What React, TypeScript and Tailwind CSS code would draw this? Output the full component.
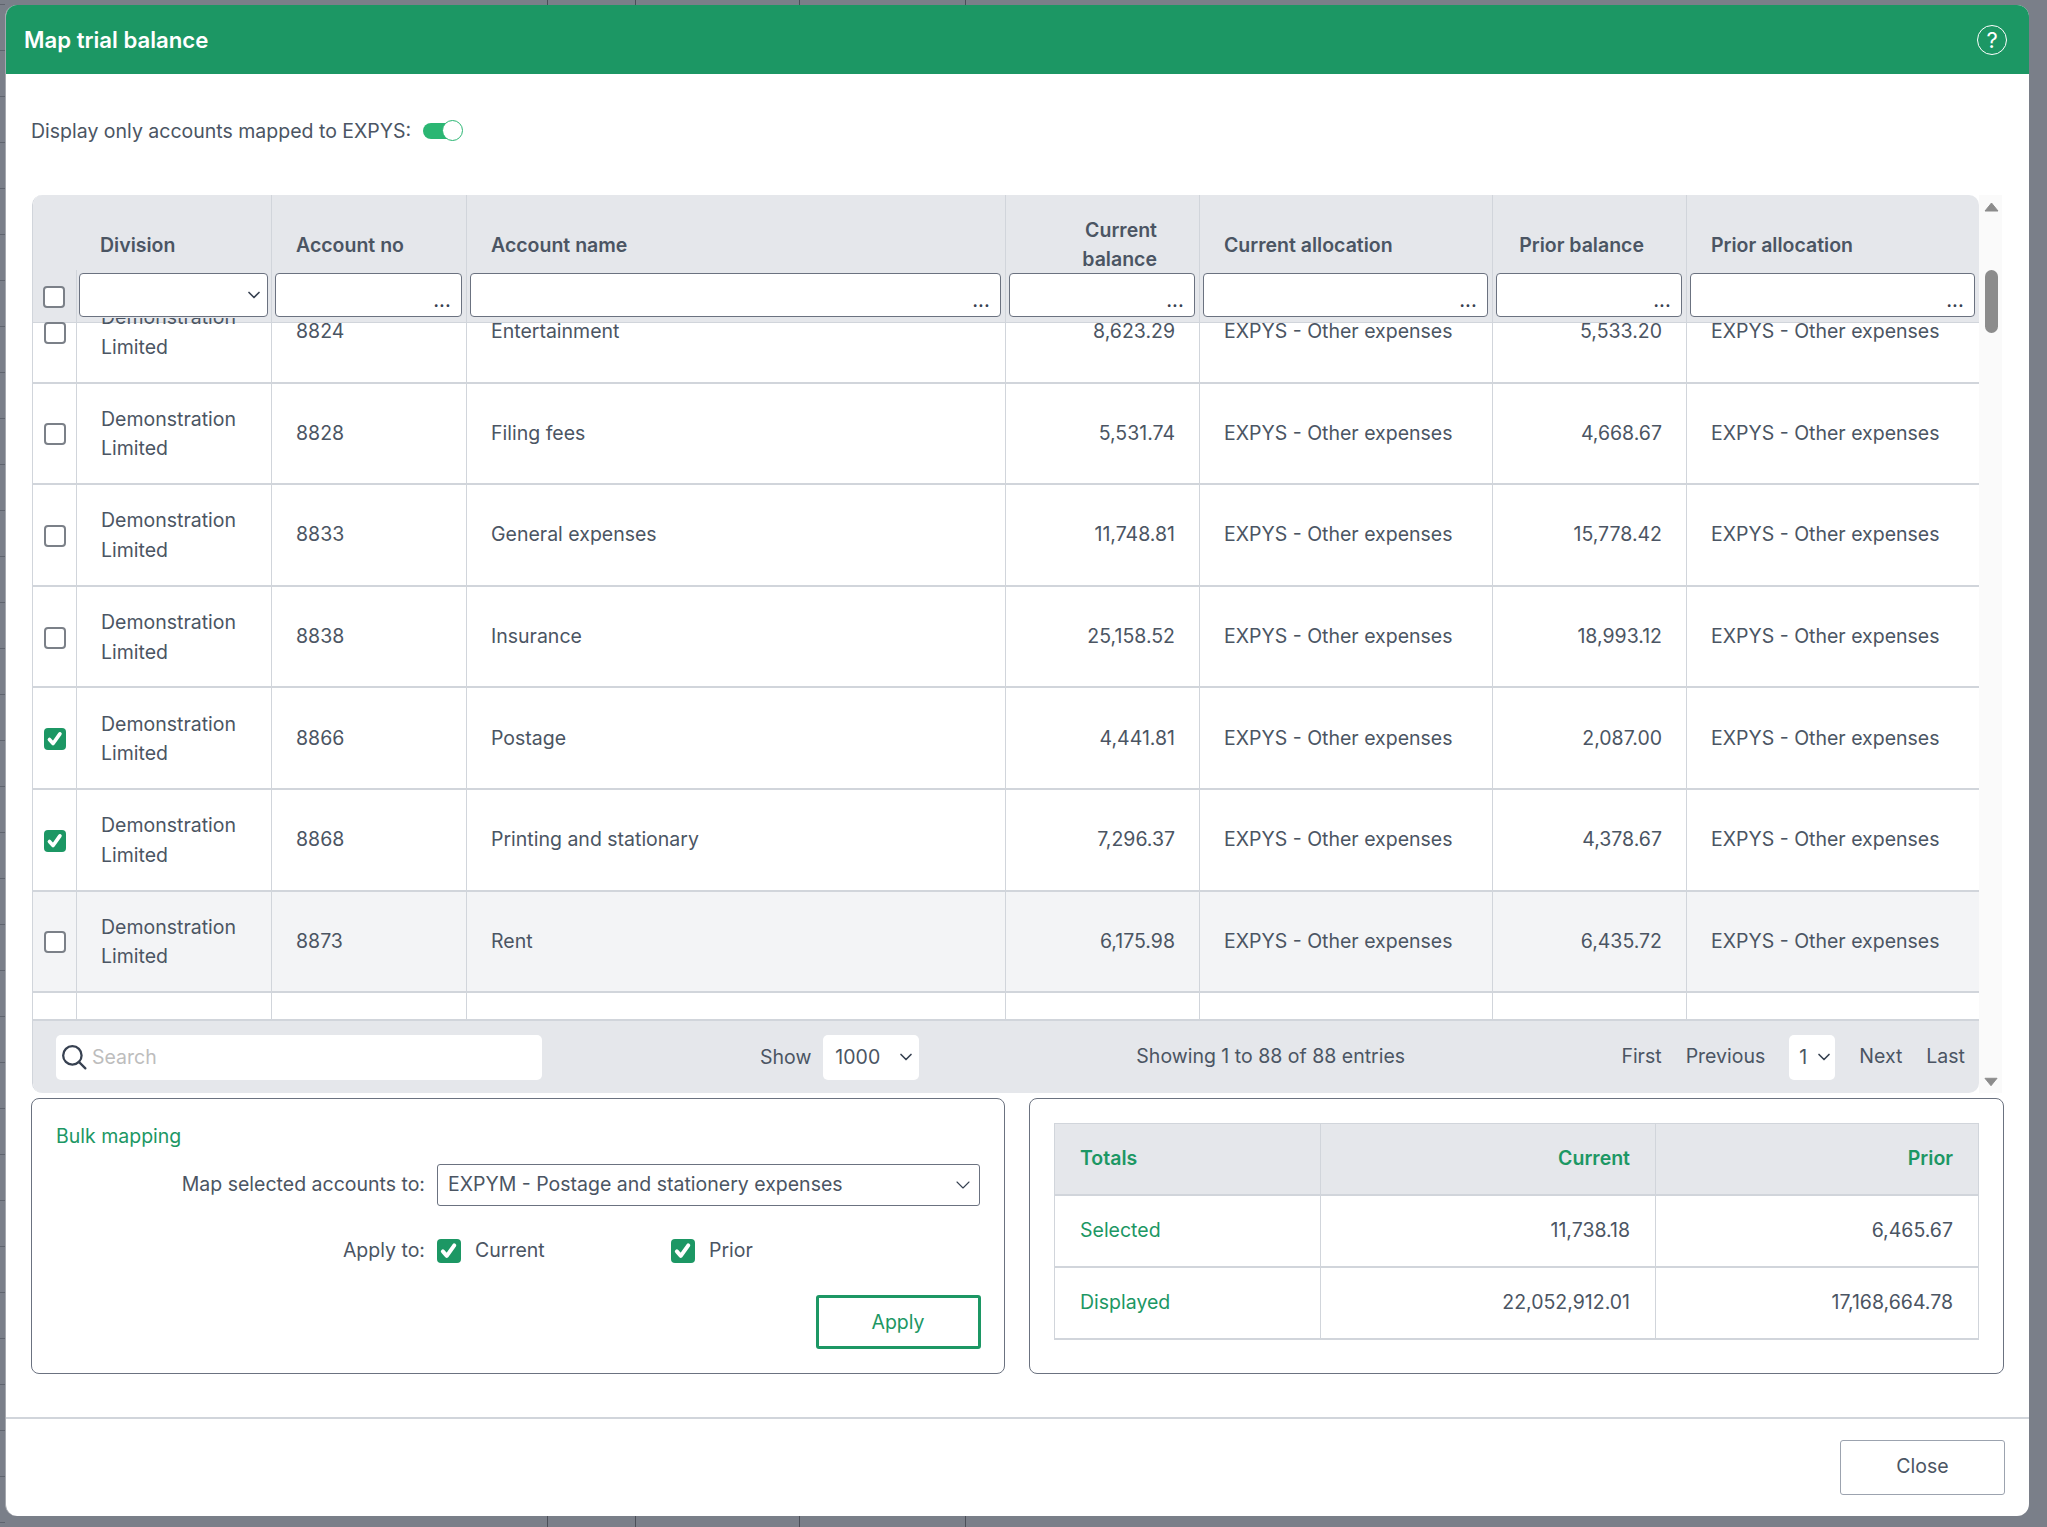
import { ChevronDown } from 'lucide-react';

const rows = [
  { no: '8824', name: 'Entertainment', current: '8,623.29', prior: '5,533.20' },
  { no: '8828', name: 'Filing fees', current: '5,531.74', prior: '4,668.67' },
  { no: '8833', name: 'General expenses', current: '11,748.81', prior: '15,778.42' },
  { no: '8838', name: 'Insurance', current: '25,158.52', prior: '18,993.12' },
  { no: '8866', name: 'Postage', current: '4,441.81', prior: '2,087.00', checked: true },
  { no: '8868', name: 'Printing and stationary', current: '7,296.37', prior: '4,378.67', checked: true },
  { no: '8873', name: 'Rent', current: '6,175.98', prior: '6,435.72', hover: true },
];

const gridCols = 'grid grid-cols-[43px_195px_195px_539px_194px_293px_194px_293px]';

const Checkbox = ({ checked, className }: { checked?: boolean; className?: string }) =>
  checked ? (
    <span className={`flex items-center justify-center rounded-[4px] bg-[#1c9764] ${className}`}>
      <svg viewBox="0 0 24 24" className="w-[88%] h-[88%]" fill="none" stroke="white" strokeWidth="4.5" strokeLinecap="round" strokeLinejoin="round">
        <path d="M5.5 13l4.5 5L18.5 6" />
      </svg>
    </span>
  ) : (
    <span className={`block rounded-[4px] border-2 border-[#7b8088] bg-white ${className}`} />
  );

const FilterInput = () => (
  <div className="h-[44px] ml-[3px] mr-[4px] mt-[3px] rounded-[4px] border border-[#6b7280] bg-white flex justify-end items-end pr-[10px] pb-[7px]">
    <span className="text-[16px] leading-[16px] font-bold tracking-[0.5px] text-[#374151]">...</span>
  </div>
);

const HeaderCell = ({ label, right }: { label: React.ReactNode; right?: boolean }) => (
  <div className={`border-l border-[#d1d5db] flex items-center pt-[21px] font-semibold leading-[29px] ${right ? 'justify-end text-right pr-[42px]' : 'pl-[24px]'}`}>
    <span>{label}</span>
  </div>
);

const FilterCell = () => (
  <div className="border-l border-[#d1d5db]">
    <FilterInput />
  </div>
);

const Cell = ({ children, right }: { children: React.ReactNode; right?: boolean }) => (
  <div className={`border-l border-[#d1d5db] flex items-center ${right ? 'justify-end pr-[24px]' : 'pl-[24px]'}`}>
    {children}
  </div>
);

const Row = ({ no, name, current, prior, checked, hover, first }: (typeof rows)[number] & { first: boolean }) => (
  <div className={`${gridCols} h-[101.6px] border-b-2 border-[#d1d5db] ${first ? 'bg-transparent' : hover ? 'bg-[#f3f4f6]' : 'bg-white'}`}>
    <div className="flex items-center justify-center pl-[1px] pt-[2px]">
      <Checkbox checked={checked} className="w-[22px] h-[22px]" />
    </div>
    <Cell>
      <span className="leading-[29.5px] pt-[2px]">
        Demonstration
        <br />
        Limited
      </span>
    </Cell>
    <Cell>{no}</Cell>
    <Cell>{name}</Cell>
    <Cell right>{current}</Cell>
    <Cell>EXPYS - Other expenses</Cell>
    <Cell right>{prior}</Cell>
    <Cell>EXPYS - Other expenses</Cell>
  </div>
);

const SmallSelect = ({ value, className }: { value: string; className: string }) => (
  <div className={`h-[45px] rounded-[5px] bg-white flex items-center justify-between ${className}`}>
    <span className="pt-[1px]">{value}</span>
    <ChevronDown size={20} strokeWidth={2} className="text-[#374151]" />
  </div>
);

const TotalsRow = ({ label, current, prior }: { label: string; current: string; prior: string }) => (
  <div className="grid grid-cols-[265px_335px_323px] h-[72px] border-b-2 border-[#d1d5db]">
    <div className="flex items-center pl-[25px] text-[#1c9764]">{label}</div>
    <div className="flex items-center justify-end pr-[25px] border-l border-[#d1d5db]">{current}</div>
    <div className="flex items-center justify-end pr-[25px] border-l border-[#d1d5db]">{prior}</div>
  </div>
);

// bits of the spreadsheet behind the dialog, top and bottom
const GridStrip = ({ className }: { className: string }) => (
  <div className={`flex ${className}`}>
    <span className="ml-[542px] border-l border-[#4b4f58]" />
    <span className="ml-[87px] border-l border-[#4b4f58]" />
    <span className="ml-[163px] border-l border-[#4b4f58]" />
    <span className="ml-[165px] border-l border-[#4b4f58]" />
  </div>
);

export default function App() {
  return (
    <div className="w-[2047px] h-[1527px] overflow-hidden pl-[5px] bg-[#7a7f89] bg-[linear-gradient(180deg,#5f646e_1px,transparent_1px)] bg-[length:5px_46px] bg-[position:0_4px] bg-repeat-y font-['Inter','Liberation_Sans',sans-serif] text-[19.5px] text-[#4b5563]">
      <GridStrip className="h-[5px]" />
      <div className="w-[2024px] h-[1511px] rounded-[12px] overflow-hidden bg-white flex flex-col border-l border-[#a6a9af]">
        <div className="h-[69px] shrink-0 bg-[#1c9764] flex items-center justify-between pl-[18px] pr-[22px] text-white">
          <h1 className="text-[22.2px] font-semibold">Map trial balance</h1>
          <div className="w-[30px] h-[30px] rounded-full border-[1.5px] border-white flex items-center justify-center text-[22px] leading-none">?</div>
        </div>

        <div className="h-[121px] shrink-0 pl-[25px] pt-[46px] flex items-start">
          <span className="leading-[23px]">Display only accounts mapped to EXPYS:</span>
          <div className="ml-[12px] flex items-center">
            <span className="w-[27px] h-[16px] rounded-l-full bg-[#2bb673]" />
            <span className="-ml-[8px] w-[21px] h-[21px] rounded-full bg-white border border-[#2bb673]" />
          </div>
        </div>

        <div className="flex ml-[26px] shrink-0">
          <div className="w-[1947px] h-[898px] flex flex-col rounded-[10px] overflow-hidden border-l border-[#d1d5db]">
            <div className="bg-[#e5e7eb] border-b border-[#d1d5db] text-[#4b5563]">
              <div className="grid grid-cols-[238px_195px_539px_194px_293px_194px_293px] h-[75px]">
                <div className="flex items-center pl-[67px] pt-[23px] font-semibold">Division</div>
                <HeaderCell label="Account no" />
                <HeaderCell label="Account name" />
                <HeaderCell
                  right
                  label={
                    <>
                      Current
                      <br />
                      balance
                    </>
                  }
                />
                <HeaderCell label="Current allocation" />
                <HeaderCell right label="Prior balance" />
                <HeaderCell label="Prior allocation" />
              </div>
              <div className={`${gridCols} h-[52px]`}>
                <div className="flex items-center justify-center pr-[1px] pt-[2px]">
                  <Checkbox className="w-[22px] h-[22px]" />
                </div>
                <div className="border-l border-[#d1d5db]">
                  <div className="h-[44px] ml-[2px] mr-[3px] mt-[3px] rounded-[4px] border border-[#6b7280] bg-white flex items-center justify-end pr-[3px]">
                    <ChevronDown size={20} strokeWidth={2} className="text-[#374151]" />
                  </div>
                </div>
                <FilterCell />
                <FilterCell />
                <FilterCell />
                <FilterCell />
                <FilterCell />
                <FilterCell />
              </div>
            </div>

            {/* the scrolled rows run up under the inputs, over the last 5px of the grey header */}
            <div className="h-[701px] -mt-[5px] overflow-hidden bg-[linear-gradient(180deg,transparent_5px,white_5px)]">
              <div className="-mt-[36px]">
                {rows.map((row, index) => (
                  <Row key={row.no} {...row} first={index === 0} />
                ))}
                <div className={`${gridCols} h-[100px] bg-white`}>
                  <div />
                  <Cell>{''}</Cell>
                  <Cell>{''}</Cell>
                  <Cell>{''}</Cell>
                  <Cell>{''}</Cell>
                  <Cell>{''}</Cell>
                  <Cell>{''}</Cell>
                  <Cell>{''}</Cell>
                </div>
              </div>
            </div>

            <div className="h-[74px] shrink-0 bg-[#e5e7eb] border-t-2 border-[#d1d5db] flex items-center">
              <div className="ml-[23px] w-[486px] h-[45px] rounded-[5px] bg-white flex items-center pl-[5px] gap-[5px] text-[#bdbdbd]">
                <svg viewBox="0 0 24 24" className="w-[26px] h-[26px] text-[#374151]" fill="none" stroke="currentColor" strokeWidth="2.1" strokeLinecap="round">
                  <circle cx="10.5" cy="10.5" r="8.5" />
                  <path d="M16.5 16.5l6 6" />
                </svg>
                <span className="pt-[1px]">Search</span>
              </div>
              <span className="ml-[218px] pt-[1px]">Show</span>
              <SmallSelect value="1000" className="ml-[12px] w-[96px] pl-[12px] pr-[3px]" />
              <span className="ml-[217px]">Showing 1 to 88 of 88 entries</span>
              <div className="ml-auto mr-[14px] flex items-center gap-[24px]">
                <span className="pb-[1px]">First</span>
                <span className="pb-[1px]">Previous</span>
                <SmallSelect value="1" className="w-[46px] pl-[10px] pr-[1px]" />
                <span className="pb-[1px]">Next</span>
                <span className="pb-[1px]">Last</span>
              </div>
            </div>
          </div>

          <div className="w-[23px] h-[898px] bg-[#fafafa] flex flex-col items-center pl-[1px] pt-[7px] pb-[6px]">
            <svg viewBox="0 0 15 10" className="w-[15px] h-[10px] shrink-0" fill="#8c8c8c" stroke="#8c8c8c" strokeLinejoin="round">
              <path d="M7.5 1L14 9H1z" />
            </svg>
            <div className="mt-[58px] w-[13px] h-[63px] rounded-full bg-[#8c8c8c]" />
            <svg viewBox="0 0 15 10" className="mt-auto w-[14px] h-[10px] shrink-0" fill="#8c8c8c" stroke="#8c8c8c" strokeLinejoin="round">
              <path d="M1 1h13L7.5 9z" />
            </svg>
          </div>
        </div>

        <div className="flex gap-[24px] ml-[25px] mt-[5px] h-[276px] shrink-0">
          <div className="w-[974px] rounded-[8px] border border-[#6b7280] px-[24px] pt-[24px]">
            <div className="text-[#1c9764] leading-[27px]">Bulk mapping</div>
            <div className="flex items-center mt-[14px]">
              <span className="w-[381px] text-right shrink-0 -ml-[12px] mr-[12px]">Map selected accounts to:</span>
              <div className="w-[543px] h-[42px] shrink-0 rounded-[3px] border border-[#6b7280] flex items-center justify-between pl-[10px] pr-[4px]">
                <span>EXPYM - Postage and stationery expenses</span>
                <ChevronDown size={24} strokeWidth={1.1} className="text-[#374151]" />
              </div>
            </div>
            <div className="flex items-center mt-[30px]">
              <span className="w-[381px] text-right shrink-0 -ml-[12px] mr-[12px]">Apply to:</span>
              <Checkbox checked className="w-[24px] h-[24px]" />
              <span className="ml-[14px] w-[196px]">Current</span>
              <Checkbox checked className="w-[24px] h-[24px]" />
              <span className="ml-[14px]">Prior</span>
            </div>
            <div className="flex justify-end mt-[30px] -mr-[1px]">
              <button className="w-[165px] h-[54px] pr-[1px] rounded-[3px] border-[3px] border-[#1c9764] text-[#1c9764]">Apply</button>
            </div>
          </div>

          <div className="w-[975px] rounded-[8px] border border-[#6b7280] pl-[24px] pt-[24px]">
            <div className="w-[925px] border-l border-r border-t border-[#d1d5db]">
              <div className="grid grid-cols-[265px_335px_323px] h-[72px] bg-[#e5e7eb] border-b-2 border-[#d1d5db] font-semibold text-[#1c9764]">
                <div className="flex items-center pl-[25px]">Totals</div>
                <div className="flex items-center justify-end pr-[25px] border-l border-[#d1d5db]">Current</div>
                <div className="flex items-center justify-end pr-[25px] border-l border-[#d1d5db]">Prior</div>
              </div>
              <TotalsRow label="Selected" current="11,738.18" prior="6,465.67" />
              <TotalsRow label="Displayed" current="22,052,912.01" prior="17,168,664.78" />
            </div>
          </div>
        </div>

        <div className="mt-[43px] flex-1 border-t-2 border-[#d1d5db] flex justify-end items-start pt-[21px] pr-[24px]">
          <button className="w-[165px] h-[55px] pb-[1px] rounded-[3px] border border-[#9ca3af]">Close</button>
        </div>
      </div>
      <GridStrip className="h-[11px]" />
    </div>
  );
}
